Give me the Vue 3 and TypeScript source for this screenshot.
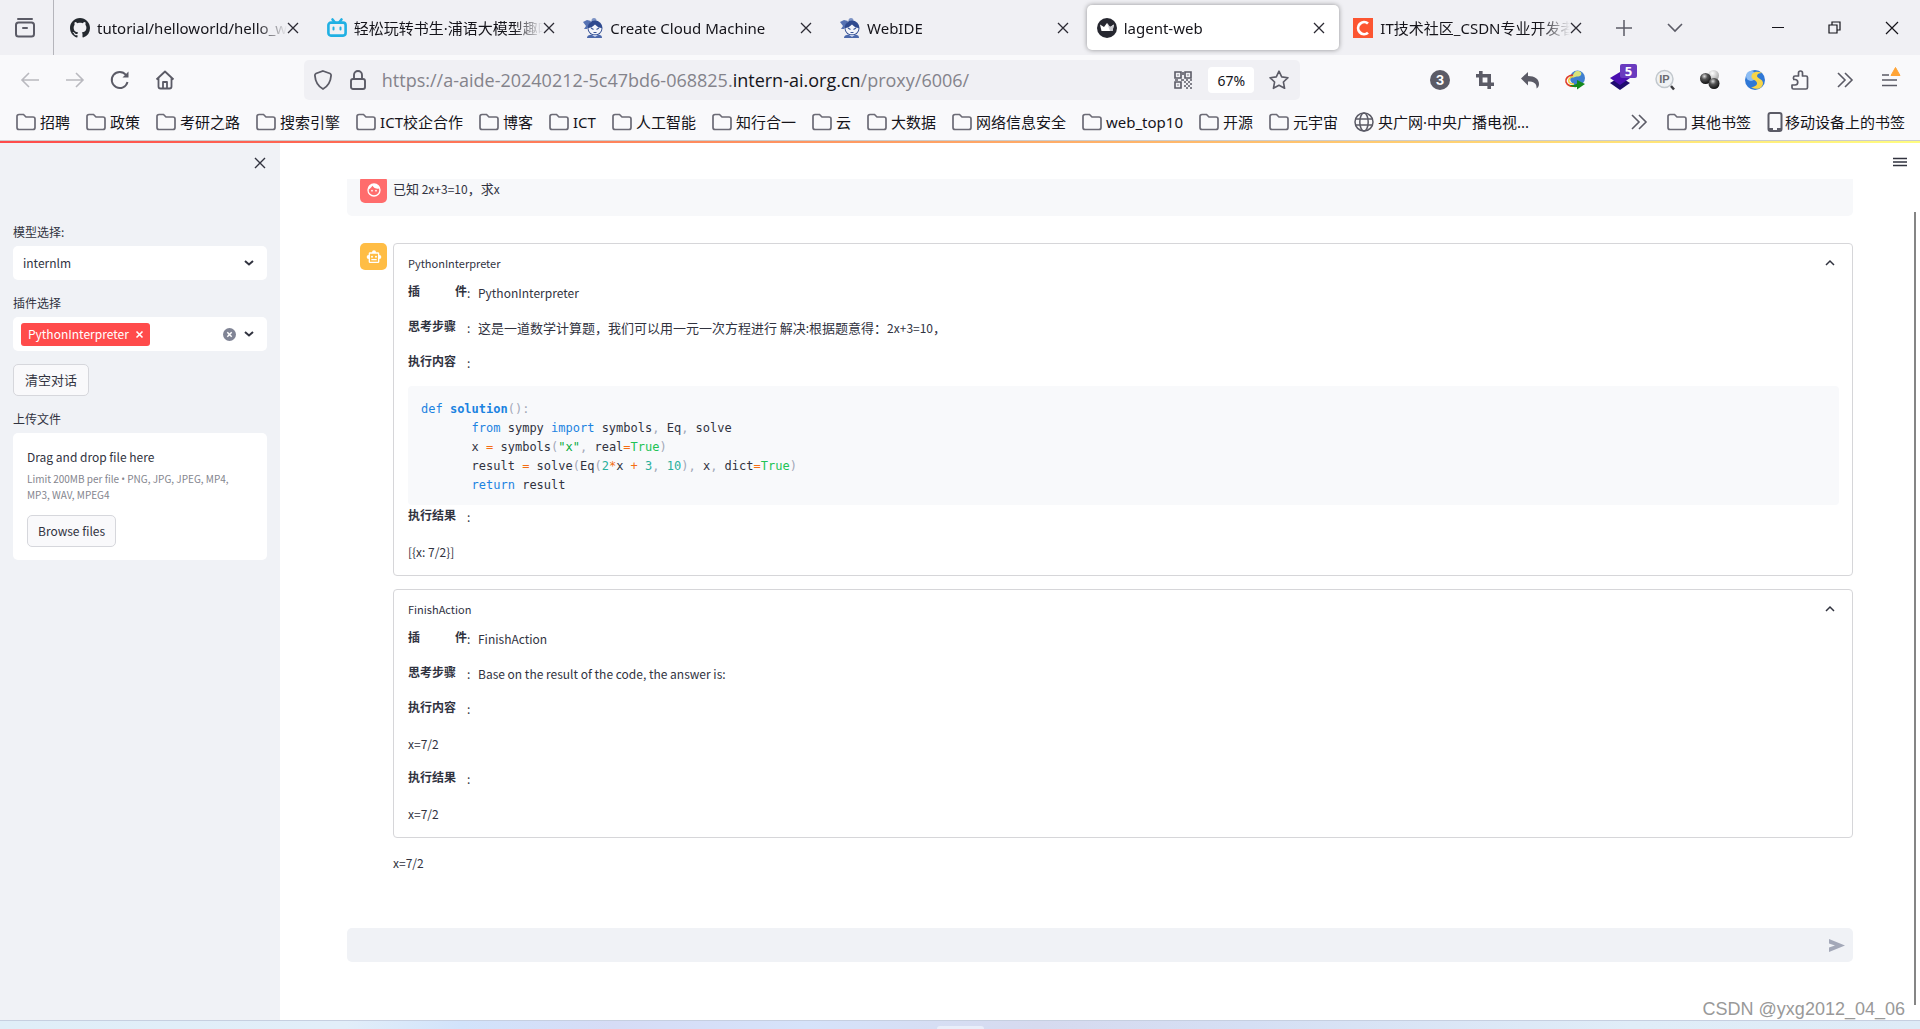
<script setup lang="ts">
import { ref } from 'vue'

interface Tab {
  icon: 'github' | 'bili' | 'monk' | 'crown' | 'csdn'
  title: string
  active?: boolean
}

interface Step {
  label: string
  value?: string
  justified?: boolean
}

interface Token {
  t: string
  c?: string
}

const tabs: Tab[] = [
  { icon: 'github', title: 'tutorial/helloworld/hello_world.md' },
  { icon: 'bili', title: '轻松玩转书生·浦语大模型趣味' },
  { icon: 'monk', title: 'Create Cloud Machine' },
  { icon: 'monk', title: 'WebIDE' },
  { icon: 'crown', title: 'lagent-web', active: true },
  { icon: 'csdn', title: 'IT技术社区_CSDN专业开发者社区' },
]

const bookmarks: string[] = [
  '招聘', '政策', '考研之路', '搜索引擎', 'ICT校企合作', '博客', 'ICT', '人工智能',
  '知行合一', '云', '大数据', '网络信息安全', 'web_top10', '开源', '元宇宙',
]

const code: Token[][] = [
  [{ t: 'def', c: 'kw' }, { t: ' ' }, { t: 'solution', c: 'fn' }, { t: '():', c: 'pu' }],
  [{ t: '       ' }, { t: 'from', c: 'kw' }, { t: ' sympy ' }, { t: 'import', c: 'kw' }, { t: ' symbols' }, { t: ',', c: 'pu' }, { t: ' Eq' }, { t: ',', c: 'pu' }, { t: ' solve' }],
  [{ t: '       x ' }, { t: '=', c: 'op' }, { t: ' symbols' }, { t: '(', c: 'pu' }, { t: '"x"', c: 'st' }, { t: ',', c: 'pu' }, { t: ' real' }, { t: '=', c: 'op' }, { t: 'True', c: 'bo' }, { t: ')', c: 'pu' }],
  [{ t: '       result ' }, { t: '=', c: 'op' }, { t: ' solve' }, { t: '(', c: 'pu' }, { t: 'Eq' }, { t: '(', c: 'pu' }, { t: '2', c: 'nu' }, { t: '*', c: 'op' }, { t: 'x ' }, { t: '+', c: 'op' }, { t: ' ' }, { t: '3', c: 'nu' }, { t: ',', c: 'pu' }, { t: ' ' }, { t: '10', c: 'nu' }, { t: '),', c: 'pu' }, { t: ' x' }, { t: ',', c: 'pu' }, { t: ' dict' }, { t: '=', c: 'op' }, { t: 'True', c: 'bo' }, { t: ')', c: 'pu' }],
  [{ t: '       ' }, { t: 'return', c: 'kw' }, { t: ' result' }],
]

const pythonSteps: Step[] = [
  { label: '插 件', value: 'PythonInterpreter', justified: true },
  { label: '思考步骤', value: '这是一道数学计算题，我们可以用一元一次方程进行 解决:根据题意得：2x+3=10，' },
  { label: '执行内容' },
]

const finishSteps: Step[] = [
  { label: '插 件', value: 'FinishAction', justified: true },
  { label: '思考步骤', value: 'Base on the result of the code, the answer is:' },
  { label: '执行内容' },
]

/* Chinese runs are set one size larger than the Latin text beside them */
function runs(text = ''): Token[] {
  return text
    .split(/([\u3000-\u9fff\uff00-\uffef]+)/)
    .filter((t) => t !== '')
    .map((t) => ({ t, c: /[\u3000-\u9fff\uff00-\uffef]/.test(t) ? 'han' : undefined }))
}

const question = '已知 2x+3=10，求x'

const model = ref('internlm')
const plugin = ref('')
const prompt = ref('')
</script>

<template>
  <div class="window">
    <header class="chrome">
      <div class="tabbar">
        <button class="tab-list" aria-label="Recent browsing">
          <svg width="22" height="22" viewBox="0 0 22 22" fill="none" stroke="#5b5b66" stroke-width="2" stroke-linecap="round"><path d="M4 2h14" /><rect x="2" y="5.500" width="18" height="14" rx="2.500" /><path d="M9 11h4" /></svg>
        </button>
        <div class="tabs">
          <div v-for="(tab, i) in tabs" :key="i" class="tab" :class="{ active: tab.active }">
            <svg v-if="tab.icon === 'github'" width="20" height="20" viewBox="0 0 16 16" fill="#24292f"><path d="M8 0C3.580 0 0 3.580 0 8c0 3.540 2.290 6.530 5.470 7.590.4.070.55-.17.55-.38 0-.19-.01-.82-.01-1.490-2.010.37-2.530-.49-2.690-.94-.09-.23-.48-.94-.82-1.130-.28-.15-.68-.52-.01-.53.63-.01 1.080.58 1.230.82.72 1.210 1.870.87 2.330.66.07-.52.28-.87.51-1.070-1.780-.2-3.640-.89-3.640-3.950 0-.87.31-1.590.82-2.150-.08-.2-.36-1.020.08-2.120 0 0 .67-.21 2.200.82.64-.18 1.320-.27 2-.27s1.360.09 2 .27c1.530-1.040 2.200-.82 2.200-.82.44 1.100.16 1.920.08 2.120.51.56.82 1.270.82 2.150 0 3.070-1.870 3.750-3.650 3.950.29.25.54.73.54 1.480 0 1.070-.01 1.930-.01 2.200 0 .21.15.46.55.38A8.010 8.010 0 0 0 16 8c0-4.420-3.580-8-8-8z" /></svg>
            <svg v-else-if="tab.icon === 'bili'" width="20" height="20" viewBox="0 0 20 20" fill="none" stroke="#20b0e3" stroke-width="2.600" stroke-linecap="round"><path d="M5.500 1.500l2 2.500M14.500 1.500l-2 2.500" /><rect x="1.400" y="4.600" width="17.200" height="13" rx="2.500" /><path d="M6.500 9.500v2M13.500 9.500v2" stroke-width="2" /></svg>
            <svg v-else-if="tab.icon === 'monk'" width="20" height="20" viewBox="0 0 20 20"><circle cx="11" cy="2.500" r="2.500" fill="#7d93c4" /><path d="M0 4l4-2 4 1-2 4-2 4-3 0 2-3z" fill="#5672b3" /><circle cx="12" cy="10" r="7.500" fill="#2f4a8f" /><path d="M5.500 10c2 0 4-1 6.500-3.500 2.500 2.500 4 3.500 6.500 3.500 0 4-3 6.500-6.500 6.500S5.500 14 5.500 10z" fill="#f3f5fa" /><path d="M8 10l2.500 1.500M16 10l-2.500 1.500M10.500 14.500h3" stroke="#3a5597" stroke-width="1.200" /><path d="M4 20c0-3 3-3.500 8-3.500s7 .5 7 3.500z" fill="#4b68ab" /><path d="M9 17l3 2 3-2z" fill="#c5d0ea" /></svg>
            <svg v-else-if="tab.icon === 'crown'" width="20" height="20" viewBox="0 0 20 20"><circle cx="10" cy="10" r="10" fill="#262730" /><path d="M3 6.500l4 2.500 3-4 3 4 4-2.500L15.500 13h-11z" fill="#fff" /><path d="M10 5l3 4 4-2.500L15.500 13H13z" fill="#c9c9cf" /></svg>
            <svg v-else width="20" height="20" viewBox="0 0 20 20"><path d="M0 0h20v20H0z" fill="#fc5531" /><path d="M15 5.500A6 6 0 1 0 15 14.700" fill="none" stroke="#fff" stroke-width="2.800" /></svg>
            <span class="tab-title">{{ tab.title }}</span>
            <button class="tab-close" aria-label="Close tab">
              <svg width="12" height="12" viewBox="0 0 12 12" stroke="#2b2a33" stroke-width="1.300"><path d="M1 1l10 10M11 1L1 11" /></svg>
            </button>
          </div>
        </div>
        <button class="strip-btn" aria-label="New tab"><svg width="16" height="16" viewBox="0 0 16 16" stroke="#5b5b66" stroke-width="1.500"><path d="M8 0v16M0 8h16" /></svg></button>
        <button class="strip-btn" aria-label="List all tabs"><svg width="16" height="10" viewBox="0 0 16 10" fill="none" stroke="#5b5b66" stroke-width="1.600"><path d="M1 1l7 7 7-7" /></svg></button>
        <div class="window-controls">
          <button aria-label="Minimize"><svg width="12" height="12" viewBox="0 0 12 12" stroke="#15141a"><path d="M0 5.500h12" /></svg></button>
          <button aria-label="Restore"><svg width="13" height="13" viewBox="0 0 13 13" fill="none" stroke="#15141a" stroke-width="1.200"><path d="M1 4h8v8H1zM4 4V1h8v8H9" /></svg></button>
          <button aria-label="Close"><svg width="14" height="14" viewBox="0 0 14 14" stroke="#15141a" stroke-width="1.200"><path d="M1 1l12 12M13 1L1 13" /></svg></button>
        </div>
      </div>

      <nav class="toolbar">
        <div class="tools">
          <button aria-label="Back"><svg width="18" height="16" viewBox="0 0 18 16" fill="none" stroke="#b9b9bf" stroke-width="1.600"><path d="M18 8H1M8 1L1 8l7 7" /></svg></button>
          <button aria-label="Forward"><svg width="18" height="16" viewBox="0 0 18 16" fill="none" stroke="#b9b9bf" stroke-width="1.600"><path d="M0 8h17M10 1l7 7-7 7" /></svg></button>
          <button aria-label="Reload"><svg width="20" height="20" viewBox="0 0 20 20" fill="none" stroke="#5b5b66" stroke-width="1.900"><path d="M17.500 12A8 8 0 1 1 16 5" /><path d="M18.500 1.500v6h-6z" fill="#5b5b66" stroke="none" /></svg></button>
          <button aria-label="Home"><svg width="20" height="20" viewBox="0 0 20 20" fill="none" stroke="#5b5b66" stroke-width="1.800" stroke-linejoin="round"><path d="M1.500 9.500L10 1.500l8.500 8M3.500 8v8.500a2 2 0 0 0 2 2h9a2 2 0 0 0 2-2V8M8 18v-6h4v6" /></svg></button>
        </div>
        <div class="spring"></div>
        <div class="urlbar">
          <svg width="18" height="20" viewBox="0 0 18 20" fill="none" stroke="#5b5b66" stroke-width="1.800"><path d="M9 1L16 3.500c1 .5 1.200 1 1.100 2C16.700 11 14.500 16 9 19 3.500 16 1.300 11 .9 5.500c-.1-1 .1-1.500 1.100-2z" /></svg>
          <svg class="lock" width="16" height="20" viewBox="0 0 16 20" fill="none" stroke="#5b5b66" stroke-width="1.900"><rect x="1" y="9" width="14" height="10" rx="2" /><path d="M4 9V5a4 4 0 0 1 8 0v4" /></svg>
          <div class="url" role="textbox" aria-label="Address"><span>https://a-aide-20240212-5c47bd6-068825.</span><b>intern-ai.org.cn</b><span>/proxy/6006/</span></div>
          <svg width="18" height="18" viewBox="0 0 18 18" fill="none" stroke="#5b5b66" stroke-width="1.600"><path d="M1 1h6v6H1zM11 1h6v6h-6zM1 11h6v6H1zM3.500 4h1M13.500 4h1M3.500 14h1" /><path d="M9 1v3M7 9h3M1 9h3M12 9h2M16 9h2M10 11h2M14 11h2M12 13h2M16 13h2M10 15h2M14 15h2M12 17h2M16 17h2" /></svg>
          <button class="zoom-level">67%</button>
          <svg width="20" height="20" viewBox="0 0 20 20" fill="none" stroke="#5b5b66" stroke-width="1.600" stroke-linejoin="round"><path d="M10 1.200l2.700 5.700 6.300.8-4.600 4.300 1.200 6.300L10 15.300l-5.600 3 1.200-6.300L1 7.700l6.300-.8z" /></svg>
        </div>
        <div class="spring"></div>
        <div class="tools">
          <button aria-label="Tab count"><svg width="20" height="20" viewBox="0 0 20 20"><circle cx="10" cy="10" r="10" fill="#5b5b66" /><text x="10" y="14.500" text-anchor="middle" class="count-text">3</text></svg></button>
          <button aria-label="Crop"><svg width="18" height="18" viewBox="0 0 18 18" fill="none" stroke="#5b5b66" stroke-width="3.600"><path d="M4.800 0v13.200H18M0 4.800h13.200V18" /></svg></button>
          <button aria-label="Undo"><svg width="18" height="18" viewBox="0 0 18 18" fill="#5b5b66"><path d="M7 1v4c7 0 11 3 11 8 0 2-1 3.500-2.500 4.500C16 12.500 13 10.500 7 10.500v4L0 7.500z" /></svg></button>
          <button aria-label="Download manager"><svg width="20" height="20" viewBox="0 0 20 20"><circle cx="12.500" cy="8" r="7.500" fill="#3f7fd0" /><path d="M12 1c4 0 5 2 4 4s-4 1-6 2-3 0-2-2 2-4 4-4z" fill="#d8e27a" /><path d="M8 5C3 5 0 9 1 12s5 5 8 4" fill="none" stroke="#e03c28" stroke-width="1.600" /><path d="M8.500 6.500c-4 .5-5.500 3.500-4.500 5.500s3 2 5 2" fill="none" stroke="#f2d33a" stroke-width="1.600" /><path d="M4 14.500c3 1 6 .5 8-1V10l8 4-8 5.500V17c-3 .5-6-.5-8-2.500z" fill="#158a1c" /></svg></button>
          <button class="badged" aria-label="Layers"><svg width="20" height="20" viewBox="0 0 20 20"><path d="M0 13l10-6 10 6-10 7z" fill="#1e0b6e" /><path d="M0 8l10-6 10 6-10 7z" fill="#4a0fb0" /></svg><span class="badge">5</span></button>
          <button aria-label="IP lookup"><svg width="20" height="20" viewBox="0 0 20 20"><circle cx="9.500" cy="9" r="8.500" fill="#f0f2f4" stroke="#c2c8cd" stroke-width="1.500" /><path d="M16 16l3 3.500" stroke="#3b3b3f" stroke-width="2.500" /><text x="9.500" y="13" text-anchor="middle" class="ip-text">IP</text></svg></button>
          <button aria-label="Spheres"><svg width="20" height="20" viewBox="0 0 20 20"><defs><radialGradient id="ball" cx=".4" cy=".3" r=".7"><stop offset="0" stop-color="#ddd" /><stop offset=".4" stop-color="#555" /><stop offset="1" stop-color="#111" /></radialGradient><radialGradient id="ballLight" cx=".4" cy=".3" r=".8"><stop offset="0" stop-color="#fff" /><stop offset="1" stop-color="#999" /></radialGradient></defs><circle cx="13.500" cy="5.500" r="5.500" fill="url(#ballLight)" /><circle cx="5.500" cy="8.500" r="5.500" fill="url(#ball)" /><circle cx="14" cy="13.500" r="5.500" fill="url(#ball)" /></svg></button>
          <button aria-label="Sync"><svg width="20" height="20" viewBox="0 0 20 20"><circle cx="10" cy="10" r="10" fill="#2f78d6" /><circle cx="6" cy="6" r="5" fill="#8dbdf3" /><path d="M17 3C11 0 6 3 6.500 7c.5 3 5 3 5.500 6 .3 2-2 4-6 4 6 4 12 1 12-4 0-4-6-4.500-6-7 0-2 2-3 5-3z" fill="#f8d548" /></svg></button>
          <button aria-label="Extensions"><svg width="20" height="20" viewBox="0 0 20 20" fill="none" stroke="#5b5b66" stroke-width="1.700" stroke-linejoin="round"><path d="M3.500 9V7.500a1.500 1.500 0 0 1 1.500-1.500h3.500V3a2 2 0 0 1 4 0v3H16A1.500 1.500 0 0 1 17.500 7.500v10A1.500 1.500 0 0 1 16 19H3.500A1.500 1.500 0 0 1 2 17.500V15h3a2 2 0 0 0 0-5.500H3" /></svg></button>
          <button aria-label="More tools"><svg width="16" height="14" viewBox="0 0 16 14" fill="none" stroke="#5b5b66" stroke-width="1.600"><path d="M1 0l7 7-7 7M8 0l7 7-7 7" /></svg></button>
          <button aria-label="Application menu"><svg width="20" height="20" viewBox="0 0 20 20" fill="none" stroke="#5b5b66" stroke-width="1.600"><path d="M2 5h7M2 10h15M2 15.500h15" /><path d="M15.500-2.500l4.500 8h-9z" fill="#ffa436" stroke="#ffa436" stroke-width="1" /></svg></button>
        </div>
      </nav>

      <div class="bookmarks">
        <a v-for="name in bookmarks" :key="name" href="#" class="bookmark">
          <svg width="20" height="18" viewBox="0 0 20 18" fill="none" stroke="#6c6b76" stroke-width="1.700"><path d="M1 14.500v-11A2 2 0 0 1 3 1.500h4.500L10 4h7a2 2 0 0 1 2 2v8.500a2 2 0 0 1-2 2H3a2 2 0 0 1-2-2z" /></svg>
          <span>{{ name }}</span>
        </a>
        <a href="#" class="bookmark">
          <svg width="20" height="20" viewBox="0 0 20 20" fill="none" stroke="#5b5b66" stroke-width="1.500"><circle cx="10" cy="10" r="9" /><ellipse cx="10" cy="10" rx="4.200" ry="9" /><path d="M1.500 7h17M1.500 13h17" /></svg>
          <span>央广网·中央广播电视...</span>
        </a>
        <div class="grow"></div>
        <button class="more-bookmarks" aria-label="More bookmarks"><svg width="16" height="14" viewBox="0 0 16 14" fill="none" stroke="#5b5b66" stroke-width="1.600"><path d="M1 0l7 7-7 7M8 0l7 7-7 7" /></svg></button>
        <a href="#" class="bookmark">
          <svg width="20" height="18" viewBox="0 0 20 18" fill="none" stroke="#6c6b76" stroke-width="1.700"><path d="M1 14.500v-11A2 2 0 0 1 3 1.500h4.500L10 4h7a2 2 0 0 1 2 2v8.500a2 2 0 0 1-2 2H3a2 2 0 0 1-2-2z" /></svg>
          <span>其他书签</span>
        </a>
        <a href="#" class="bookmark mobile">
          <svg width="16" height="20" viewBox="0 0 16 20" fill="none" stroke="#5b5b66"><rect x="1.500" y="1" width="13" height="18" rx="2" stroke-width="2" /><path d="M1 17.500h5M10 17.500h5" stroke-width="3" /></svg>
          <span>移动设备上的书签</span>
        </a>
      </div>
    </header>

    <div class="decoration"></div>

    <div class="app">
      <aside class="sidebar">
        <div class="sidebar-top">
          <button aria-label="Close sidebar"><svg width="10" height="10" viewBox="0 0 10 10" stroke="#31333f" stroke-width="1.400"><path d="M0 0l10 10M10 0L0 10" /></svg></button>
        </div>

        <label class="field-label" for="model">模型选择:</label>
        <div class="field">
          <select id="model" v-model="model">
            <option value="internlm">internlm</option>
          </select>
          <svg class="chev" width="10" height="6" viewBox="0 0 10 6" fill="none" stroke="#31333f" stroke-width="2"><path d="M1 1l4 3.500L9 1" /></svg>
        </div>

        <label class="field-label" for="plugin">插件选择</label>
        <div class="field">
          <span class="chip">PythonInterpreter<button aria-label="Remove PythonInterpreter"><svg width="7" height="7" viewBox="0 0 7 7" stroke="#fff" stroke-width="1.600"><path d="M.5.5l6 6M6.500.5l-6 6" /></svg></button></span>
          <input id="plugin" v-model="plugin" type="text" />
          <button class="clear" aria-label="Clear all"><svg width="13" height="13" viewBox="0 0 13 13"><circle cx="6.500" cy="6.500" r="6.500" fill="#808495" /><path d="M4.300 4.300l4.400 4.400M8.700 4.300L4.300 8.700" stroke="#fff" stroke-width="1.500" /></svg></button>
          <svg class="chev" width="10" height="6" viewBox="0 0 10 6" fill="none" stroke="#31333f" stroke-width="2"><path d="M1 1l4 3.500L9 1" /></svg>
        </div>

        <button class="btn">清空对话</button>

        <div class="field-label">上传文件</div>
        <section class="uploader">
          <div class="up-title">Drag and drop file here</div>
          <div class="up-hint">Limit 200MB per file <span class="dot">•</span> PNG, JPG, JPEG, MP4, MP3, WAV, MPEG4</div>
          <button class="btn">Browse files</button>
        </section>
      </aside>

      <main class="main">
        <div class="main-top">
          <button aria-label="Main menu"><svg width="14" height="10" viewBox="0 0 14 10" stroke="#31333f" stroke-width="1.300"><path d="M0 1.500h14M0 5h14M0 8.500h14" /></svg></button>
        </div>

        <div class="history">
          <article class="message user">
            <span class="avatar red"><svg width="16" height="16" viewBox="0 0 24 24" fill="#fff"><path d="M9 11.750a1.250 1.250 0 1 0 0 2.500 1.250 1.250 0 0 0 0-2.500zm6 0a1.250 1.250 0 1 0 0 2.500 1.250 1.250 0 0 0 0-2.500zM12 2a10 10 0 1 0 0 20 10 10 0 0 0 0-20zm0 18a8 8 0 0 1-7.950-8.870c2.360-1.050 4.230-2.980 5.210-5.370a9.970 9.970 0 0 0 10.410 3.970A8 8 0 0 1 12 20z" /></svg></span>
            <p><span v-for="(r, i) in runs(question)" :key="i" :class="r.c">{{ r.t }}</span></p>
          </article>

          <article class="message bot">
            <span class="avatar amber"><svg width="16" height="16" viewBox="0 0 24 24" fill="#fff"><path d="M20 9V7a2 2 0 0 0-2-2h-3a3 3 0 0 0-6 0H6a2 2 0 0 0-2 2v2a3 3 0 0 0 0 6v4a2 2 0 0 0 2 2h12a2 2 0 0 0 2-2v-4a3 3 0 0 0 0-6zm-2 10H6V7h12zM9 13a1.500 1.500 0 1 1 0-3 1.500 1.500 0 0 1 0 3zm7.500-1.500a1.500 1.500 0 1 1-3 0 1.500 1.500 0 0 1 3 0zM8 15h8v2H8z" /></svg></span>
            <div class="answer">
              <section class="expander">
                <button class="summary">PythonInterpreter<svg width="10" height="6" viewBox="0 0 10 6" fill="none" stroke="#31333f" stroke-width="1.500"><path d="M1 5l4-4 4 4" /></svg></button>
                <div class="steps">
                  <div v-for="s in pythonSteps" :key="s.label" class="step">
                    <strong :class="{ justified: s.justified }">{{ s.label }}</strong><span class="colon">:</span><span class="value"><span v-for="(r, i) in runs(s.value)" :key="i" :class="r.c">{{ r.t }}</span></span>
                  </div>
                  <pre class="code"><code><span v-for="(line, i) in code" :key="i" class="line"><span v-for="(tok, j) in line" :key="j" :class="tok.c">{{ tok.t }}</span></span></code></pre>
                  <div class="step"><strong>执行结果</strong><span class="colon">:</span></div>
                  <div class="step">[{x: 7/2}]</div>
                </div>
              </section>

              <section class="expander">
                <button class="summary">FinishAction<svg width="10" height="6" viewBox="0 0 10 6" fill="none" stroke="#31333f" stroke-width="1.500"><path d="M1 5l4-4 4 4" /></svg></button>
                <div class="steps">
                  <div v-for="s in finishSteps" :key="s.label" class="step">
                    <strong :class="{ justified: s.justified }">{{ s.label }}</strong><span class="colon">:</span><span class="value">{{ s.value }}</span>
                  </div>
                  <div class="step">x=7/2</div>
                  <div class="step"><strong>执行结果</strong><span class="colon">:</span></div>
                  <div class="step">x=7/2</div>
                </div>
              </section>

              <p>x=7/2</p>
            </div>
          </article>
        </div>

        <form class="chat-input" @submit.prevent>
          <input v-model="prompt" type="text" aria-label="Chat message" />
          <button aria-label="Send"><svg width="16" height="13" viewBox="0 0 16 13" fill="#a3a8b8"><path d="M0 0l16 6.500L0 13V8.500l6-2-6-2z" /></svg></button>
        </form>
        <div class="scroll-thumb"></div>
      </main>
    </div>

    <footer class="taskbar"><span class="task"></span></footer>
    <div class="watermark">CSDN @yxg2012_04_06</div>
  </div>
</template>

<style>
body {
  margin: 0;
}
</style>

<style scoped>
.window {
  position: relative;
  display: flex;
  flex-direction: column;
  min-height: 100vh;
  overflow: hidden;
  background: #fff;
  color: #31333f;
  font-family: "Noto Sans CJK SC", sans-serif;
  font-size: 12px;
}

*, *::before, *::after {
  box-sizing: border-box;
}

button {
  display: flex;
  align-items: center;
  justify-content: center;
  padding: 0;
  border: 0;
  background: none;
  color: inherit;
  font: inherit;
}

input, select {
  min-width: 0;
  padding: 0;
  border: 0;
  outline: 0;
  background: none;
  color: inherit;
  font: inherit;
}

p {
  margin: 0;
}

svg {
  flex: none;
  overflow: visible;
}

/* browser chrome */
.chrome {
  background: #f9f9fb;
  color: #15141a;
  font-family: "Noto Sans", "Noto Sans CJK SC", sans-serif;
  font-size: 15px;
}

.tabbar {
  display: flex;
  height: 55px;
  background: #f0f0f4;
}

.tab-list {
  width: 54px;
  padding-right: 4px;
  border-right: 1px solid #b5b5bb;
}

.tabs {
  display: flex;
  flex: 1;
  padding-left: 4px;
}

.tab {
  display: flex;
  flex: 1 1 0;
  align-items: center;
  min-width: 0;
  margin: 5px 2px;
  padding: 0 14px 0 10px;
  border-radius: 5px;
}

.tab.active {
  background: #fff;
  box-shadow: 0 0 5px rgba(0, 0, 0, 0.4);
}

.tab-title {
  flex: 1;
  min-width: 0;
  margin-left: 7px;
  overflow: hidden;
  line-height: 24px;
  white-space: nowrap;
  mask-image: linear-gradient(to right, #000 calc(100% - 30px), transparent);
}

.tab-close {
  width: 12px;
}

.strip-btn {
  width: 51px;
}

.window-controls {
  display: flex;
  margin-left: 49px;
}

.window-controls button {
  width: 57px;
}

.toolbar {
  display: flex;
  align-items: center;
  height: 50px;
  padding: 0 8px 0 7px;
}

.tools {
  display: flex;
}

.tools button {
  width: 45px;
  height: 40px;
}

.spring {
  flex: 119 1 0;
}

.count-text {
  fill: #fff;
  font: 700 13px Inter, sans-serif;
}

.ip-text {
  fill: #6b6b70;
  font: 700 11px "Liberation Sans", sans-serif;
}

.badged {
  position: relative;
}

.badge {
  position: absolute;
  top: 4px;
  right: 5px;
  width: 17px;
  border-radius: 2px;
  background: #6a3bbf;
  color: #fff;
  font-size: 13px;
  font-weight: 700;
  line-height: 14px;
}

.urlbar {
  display: flex;
  flex: 994 1 0;
  align-items: center;
  height: 40px;
  padding: 0 11px 0 10px;
  border-radius: 5px;
  background: #f0f0f4;
}

.lock {
  margin-left: 18px;
}

.url {
  flex: 1;
  margin-left: 16px;
  color: #84838b;
  font-family: "Open Sans", sans-serif;
  font-size: 18px;
  white-space: nowrap;
}

.url b {
  color: #15141a;
  font-weight: 400;
}

.zoom-level {
  width: 46px;
  height: 26px;
  margin: 0 15px 0 16px;
  border-radius: 4px;
  background: #fff;
  font-size: 14px;
}

.bookmarks {
  display: flex;
  align-items: center;
  height: 35px;
  padding: 0 15px 2px 16px;
}

.bookmark {
  display: flex;
  gap: 4px;
  align-items: center;
  margin-right: 16px;
  color: inherit;
  line-height: 24px;
  text-decoration: none;
  white-space: nowrap;
}

.bookmark.mobile {
  gap: 2px;
  margin-right: 0;
}

.grow {
  flex: 1;
}

.more-bookmarks {
  margin-right: 20px;
}

.decoration {
  height: 3px;
  border-top: 1px solid #ccc;
  background: linear-gradient(90deg, #ff4b4b, #fffd80);
}

/* streamlit app */
.app {
  display: flex;
  flex: 1;
}

.sidebar {
  flex: none;
  width: 280px;
  padding: 0 13px;
  background: #f0f2f6;
}

.sidebar-top {
  display: flex;
  justify-content: flex-end;
  height: 79px;
  padding: 15px 2px 0 0;
}

.sidebar-top button {
  height: 10px;
}

.field-label {
  display: block;
  margin-bottom: 4px;
  line-height: 20px;
}

.field {
  position: relative;
  display: flex;
  align-items: center;
  height: 34px;
  margin-bottom: 13px;
  padding: 0 13px 0 8px;
  border-radius: 5px;
  background: #fff;
}

.field select {
  flex: 1;
  height: 32px;
  padding: 0 0 1px 2px;
  appearance: none;
}

.field input {
  flex: 1;
}

.chip {
  display: flex;
  gap: 7px;
  align-items: center;
  height: 23px;
  padding: 0 7px;
  border-radius: 3px;
  background: #ff4b4b;
  color: #fff;
  line-height: 20px;
}

.clear {
  margin-right: 8px;
}

.btn {
  height: 32px;
  padding: 0 10px 1px;
  border: 1px solid #d6d7dc;
  border-radius: 5px;
  background: #f9f9fb;
}

.sidebar > .btn {
  margin: 12px 0 13px;
  padding: 0 11px 1px;
  font-size: 13px;
}

.uploader {
  padding: 14px 14px 13px;
  border-radius: 5px;
  background: #fff;
}

.up-title {
  line-height: 20px;
}

.up-hint {
  margin: 4px 0 13px;
  padding-right: 12px;
  color: #84858e;
  font-size: 10px;
  line-height: 15px;
}

.dot {
  font-family: "Open Sans", sans-serif;
}

.main {
  position: relative;
  display: flex;
  flex: 1;
  flex-direction: column;
  min-width: 0;
  padding: 0 67px;
}

.main-top {
  display: flex;
  justify-content: flex-end;
  height: 36px;
  margin-right: -54px;
  padding-top: 14px;
}

.main-top button {
  height: 10px;
}

.history {
  flex: 1;
  overflow: hidden;
}

.message {
  display: flex;
  gap: 6px;
  padding-left: 13px;
}

.message.user {
  height: 51px;
  margin: -14px 0 27px;
  padding-top: 11px;
  border-radius: 5px;
  background: #f7f8fa;
  line-height: 26px;
}

.avatar {
  display: flex;
  flex: none;
  align-items: center;
  justify-content: center;
  width: 27px;
  height: 27px;
  border-radius: 5px;
}

.avatar.red {
  background: #ff6c6c;
}

.avatar.amber {
  background: #ffbd45;
}

.answer {
  flex: 1;
  min-width: 0;
  line-height: 24px;
}

.expander {
  margin-bottom: 13px;
  border: 1px solid #d6d6d9;
  border-radius: 4px;
}

.summary {
  justify-content: space-between;
  width: 100%;
  padding: 7px 17px 1px 14px;
  font-size: 11px;
  line-height: 24px;
}

.steps {
  padding: 5px 13px 0 14px;
}

.step {
  display: flex;
  height: 24px;
  margin-bottom: 11px;
}

.step strong {
  width: 59px;
  line-height: 20px;
}

.step .justified {
  text-align: justify;
  text-align-last: justify;
}

.colon {
  width: 11px;
}

.value {
  white-space: pre-wrap;
}

.han {
  font-size: 13px;
}

.code {
  margin: 0;
  padding: 14px 13px 10px;
  border-radius: 4px;
  background: #f8f9fb;
  font-family: "DejaVu Sans Mono", monospace;
  font-size: 12px;
  line-height: 19px;
}

.code code {
  font: inherit;
}

.line {
  display: block;
}

.kw { color: #1c83e1; }
.fn { color: #1c83e1; font-weight: 700; }
.pu { color: #a3a8b8; }
.op { color: #f46e14; }
.st { color: #09ab3b; }
.bo { color: #21c354; }
.nu { color: #29b09d; }

.chat-input {
  display: flex;
  align-items: center;
  height: 34px;
  margin-bottom: 58px;
  padding: 0 8px 0 13px;
  border-radius: 5px;
  background: #f0f2f6;
}

.chat-input input {
  flex: 1;
}

.scroll-thumb {
  position: absolute;
  top: 69px;
  right: 4px;
  bottom: 15px;
  width: 2px;
  background: #858585;
}

.taskbar {
  display: flex;
  justify-content: center;
  height: 9px;
  padding-top: 5px;
  border-top: 1px solid #c6cfe0;
  background: linear-gradient(90deg, #e0eef8 0, #e2eef9 18%, #d2e3fb 24%, #d6dcf6 32%, #d6e3fa 42%, #d6daef 54%, #d5dff4 65%, #e0edf8 85%, #deebf7 100%);
}

.task {
  width: 47px;
  border-radius: 4px 4px 0 0;
  background: #e9eefa;
}

.watermark {
  position: absolute;
  right: 15px;
  bottom: 8px;
  color: #999;
  font-family: "Liberation Sans", sans-serif;
  font-size: 18px;
  line-height: 24px;
}
</style>
